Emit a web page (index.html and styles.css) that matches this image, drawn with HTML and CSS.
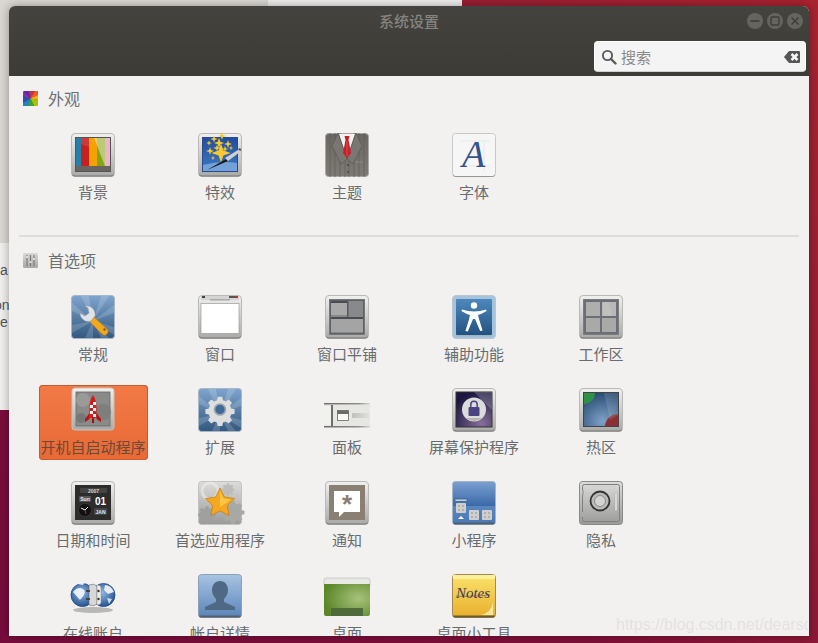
FILE: index.html
```html
<!DOCTYPE html>
<html lang="zh-CN">
<head>
<meta charset="utf-8">
<title>系统设置</title>
<link rel="stylesheet" href="styles.css">
</head>
<body>
<svg class="defs" width="0" height="0" aria-hidden="true">
  <defs>
    <linearGradient id="silver" x1="0" y1="0" x2="0" y2="1"><stop offset="0" stop-color="#f0f0ee"/><stop offset="1" stop-color="#a9a9a7"/></linearGradient>
    <linearGradient id="blue" x1="0" y1="0" x2="0" y2="1"><stop offset="0" stop-color="#7ea5cf"/><stop offset="1" stop-color="#33587f"/></linearGradient>
    <linearGradient id="deep" x1="0" y1="0" x2="0" y2="1"><stop offset="0" stop-color="#4d88bd"/><stop offset="1" stop-color="#245380"/></linearGradient>
    <linearGradient id="royal" x1="0" y1="0" x2="0" y2="1"><stop offset="0" stop-color="#1f4f9e"/><stop offset="1" stop-color="#3f78c4"/></linearGradient>
    <linearGradient id="widget" x1="0" y1="0" x2="0" y2="1"><stop offset="0" stop-color="#7a9fd0"/><stop offset="1" stop-color="#3a69a8"/></linearGradient>
    <linearGradient id="widget2" x1="0" y1="0" x2="0" y2="1"><stop offset="0" stop-color="#7098cc"/><stop offset="1" stop-color="#4a78b5"/></linearGradient>
    <linearGradient id="grey" x1="0" y1="0" x2="0" y2="1"><stop offset="0" stop-color="#d8d8d6"/><stop offset="1" stop-color="#a6a6a4"/></linearGradient>
    <linearGradient id="note" x1="0" y1="0" x2="0" y2="1"><stop offset="0" stop-color="#fbe36c"/><stop offset="1" stop-color="#e9ae2c"/></linearGradient>
    <linearGradient id="steel" x1="0" y1="0" x2="0" y2="1"><stop offset="0" stop-color="#dcdcda"/><stop offset="1" stop-color="#9a9a98"/></linearGradient>
    <linearGradient id="sky" x1="0" y1="0" x2="0" y2="1"><stop offset="0" stop-color="#a9c3e2"/><stop offset="1" stop-color="#5a85b8"/></linearGradient>
    <linearGradient id="suit" x1="0" y1="0" x2="0" y2="1"><stop offset="0" stop-color="#6a6763"/><stop offset="1" stop-color="#7e7b77"/></linearGradient>
    <linearGradient id="fade" x1="0" y1="0" x2="1" y2="0"><stop offset="0" stop-color="#bfc1bb"/><stop offset="1" stop-color="#dfe0dc"/></linearGradient>
    <linearGradient id="fadeline" x1="0" y1="0" x2="1" y2="0"><stop offset="0" stop-color="#6e6e6c"/><stop offset=".75" stop-color="#8d8d8b"/><stop offset="1" stop-color="#d5d5d3"/></linearGradient>
    <radialGradient id="grass" cx=".75" cy=".45" r=".75"><stop offset="0" stop-color="#a7c27c"/><stop offset="1" stop-color="#5b8729"/></radialGradient>
    <radialGradient id="plum" cx=".7" cy=".9" r=".9"><stop offset="0" stop-color="#86709a"/><stop offset="1" stop-color="#1c1640"/></radialGradient>
    <radialGradient id="hot" cx=".55" cy=".85" r=".9"><stop offset="0" stop-color="#7fa3c8"/><stop offset="1" stop-color="#23466d"/></radialGradient>
    <radialGradient id="globe" cx=".45" cy=".4" r=".65"><stop offset="0" stop-color="#8fb8e6"/><stop offset="1" stop-color="#1d4c8a"/></radialGradient>
    <g id="frame"><rect x=".5" y=".5" width="43" height="43" rx="3.5" fill="url(#silver)" stroke="#b9b9b7"/><path d="M1 40.5v-1a3 3 0 0 0 3 3h36a3 3 0 0 0 3-3v1a3 3 0 0 1-3 3H4a3 3 0 0 1-3-3z" fill="#777"/></g>
    <g id="rays" opacity=".16" fill="#fff"><path d="M22 26 1 8v8zM22 26 1 30v8zM22 26 10 1h8zM22 26 30 1h8zM22 26 43 10v8zM22 26 43 32v8zM22 26 14 43h8zM22 26 30 43h8z"/></g>
    <g id="puzzle"><rect width="10" height="10" rx="1" fill="#cfcfcd"/><path d="M2 2h2v2H2zM6 6h2v2H6zM6 2h2v2H6zM2 6h2v2H2z" fill="#b0b0ae"/></g>
    <path id="star4" d="M0-4 1-1 4 0 1 1 0 4-1 1-4 0-1-1z" fill="#f9c92e"/>
    <path id="gear" d="M-2-11h4l.6 3 2.400 1 2.600-1.700 2.800 2.800L8.700-3.300l1 2.400 3 .6v4l-3 .6-1 2.400 1.700 2.600-2.800 2.800-2.600-1.700-2.400 1-.6 3h-4l-.6-3-2.400-1-2.600 1.700-2.800-2.800 1.700-2.600-1-2.400-3-.6v-4l3-.6 1-2.400-1.700-2.600 2.800-2.800L-5-7l2.400-1z"/>
  </defs>
</svg>

<div class="desktop">
  <div class="bg-window">
    <div class="bg-top"></div>
    <p class="bg-text bg-a">a</p>
    <p class="bg-text bg-on">on</p>
    <p class="bg-text bg-e">e</p>
  </div>
  <div class="bg-strip"></div>
  <div class="window">
    <header class="titlebar">
      <div class="title-row">
        <h1 class="title">系统设置</h1>
        <div class="win-buttons">
          <span class="win-btn"><svg width="16" height="16" viewBox="0 0 16 16"><rect x="3.500" y="7.200" width="9" height="1.600" fill="#3f3e3a"/></svg></span>
          <span class="win-btn"><svg width="16" height="16" viewBox="0 0 16 16"><rect x="4" y="4" width="8" height="8" rx="1" fill="none" stroke="#3f3e3a" stroke-width="1.400"/></svg></span>
          <span class="win-btn"><svg width="16" height="16" viewBox="0 0 16 16"><path d="m4.500 4.500 7 7m0-7-7 7" stroke="#3f3e3a" stroke-width="1.500"/></svg></span>
        </div>
      </div>
      <div class="search-row">
        <div class="search">
          <svg width="16" height="16" viewBox="0 0 16 16"><circle cx="6.500" cy="6.500" r="4.600" fill="none" stroke="#5a5a5a" stroke-width="1.900"/><path d="m10 10 4.500 4.500" stroke="#5a5a5a" stroke-width="2.400" stroke-linecap="round"/></svg>
          <span class="search-text">搜索</span>
          <svg class="clear" width="16" height="12" viewBox="0 0 16 12"><path d="M5 0h10a1 1 0 0 1 1 1v10a1 1 0 0 1-1 1H5L0 6z" fill="#555"/><path d="m7.500 3 6 6m0-6-6 6" stroke="#f4f4f4" stroke-width="2.600"/></svg>
        </div>
      </div>
    </header>

    <main class="content">
      <section class="section section-first">
        <h2 class="section-head">
          <svg width="15" height="15" viewBox="0 0 15 15"><rect width="15" height="15" rx="1.500" fill="#8c2fa0"/><path d="M7.500 7.500 0 0h6z" fill="#5a2ba8"/><path d="M7.500 7.500 6 0h6z" fill="#c8304a"/><path d="M7.500 7.500 12 0h3v4z" fill="#ee5a20"/><path d="M7.500 7.500 15 4v5z" fill="#f5b400"/><path d="M7.500 7.500 15 9v6h-4z" fill="#a6c400"/><path d="M7.500 7.500 11 15H5z" fill="#3aa52c"/><path d="M7.500 7.500 5 15H0v-3z" fill="#1f86b8"/><path d="M7.500 7.500 0 12V5z" fill="#2c50b0"/></svg>
          <span>外观</span>
        </h2>
        <div class="grid">
          <a class="item">
            <svg class="icon" viewBox="0 0 44 44"><use href="#frame"/><rect x="4" y="4" width="36" height="35" fill="#555"/><rect x="5" y="5" width="5" height="28" fill="#2380a8"/><rect x="10" y="5" width="8" height="28" fill="#c81f1f"/><rect x="18" y="5" width="8" height="28" fill="#f5a200"/><rect x="26" y="5" width="8" height="28" fill="#85a516"/><rect x="34" y="5" width="5" height="28" fill="#e27fa4"/><path d="M10 5h8v9L10 11z" fill="#fff" opacity=".12"/><path d="M23 5h16v28h-5z" fill="#fff" opacity=".42"/><rect x="5" y="33" width="34" height="5" fill="#6a6460"/></svg>
            <span class="label">背景</span>
          </a>
          <a class="item">
            <svg class="icon" viewBox="0 0 44 44"><use href="#frame"/><rect x="4" y="4" width="36" height="35" fill="#2a4c88"/><rect x="5" y="5" width="34" height="33" fill="url(#royal)"/><path d="M5 32q18-5 34-2v8H5z" fill="#86b0e0" opacity=".75"/><use href="#star4" transform="translate(23 20) scale(2.400)"/><use href="#star4" transform="translate(24 3) scale(1)"/><use href="#star4" transform="translate(16 6) scale(.9)"/><use href="#star4" transform="translate(30 11) scale(1)"/><use href="#star4" transform="translate(21 10) scale(1.300)"/><use href="#star4" transform="translate(11 10) scale(.7)"/><use href="#star4" transform="translate(12 18) scale(1)"/><use href="#star4" transform="translate(33 15) scale(.6)"/><use href="#star4" transform="translate(15 25) scale(.6)"/><use href="#star4" transform="translate(19 15) scale(.9)"/><use href="#star4" transform="translate(27 16) scale(.8)"/><path d="M9 37 28 26l2 2z" fill="#1c1c1c"/><path d="m27 25 13-8 2 2-12 9z" fill="#cfcfcf"/><path d="m40 16 2 2 1.500-1-1.500-2z" fill="#555"/></svg>
            <span class="label">特效</span>
          </a>
          <a class="item">
            <svg class="icon" viewBox="0 0 44 44"><rect x=".5" y=".5" width="43" height="43" rx="3" fill="url(#suit)" stroke="#a9a8a6"/><path d="M5 0v44M10 0v44M15 0v44M29 0v44M34 0v44M39 0v44M20 25v19M24 25v19" stroke="#625f5c" stroke-width=".8"/><path d="M14 1h16l-8 24z" fill="#f2f2f2"/><path d="M13 0 22 26 16 31 7 13zM31 0 22 26 28 31 37 13z" fill="#7a7773" stroke="#56534f" stroke-width=".6"/><path d="M19.500 3h5l-1 4 2.500 13-4 5-4-5 2.500-13z" fill="#c81e26"/><path d="M22 8v15" stroke="#e85a5c" stroke-width=".8"/><circle cx="23" cy="32" r="1" fill="#444"/><circle cx="23" cy="39" r="1" fill="#444"/><path d="M30 29h8" stroke="#8b8985"/></svg>
            <span class="label">主题</span>
          </a>
          <a class="item">
            <svg class="icon" viewBox="0 0 44 44"><rect x=".5" y=".5" width="43" height="43" rx="3" fill="#f6f6f6" stroke="#c9c9c7"/><path d="M1 41v.5a2 2 0 0 0 2 2h38a2 2 0 0 0 2-2V41a2 2 0 0 1-2 2H3a2 2 0 0 1-2-2z" fill="#666"/><path d="M8 33h30M32 8v30M8 8h30" stroke="#e4e4e4" stroke-width=".7"/><text class="glyph-a" x="10" y="34">A</text></svg>
            <span class="label">字体</span>
          </a>
        </div>
        <hr class="divider">
      </section>

      <section class="section">
        <h2 class="section-head">
          <svg width="15" height="15" viewBox="0 0 15 15"><rect width="15" height="15" rx="1.500" fill="url(#grey)"/><path d="M4 2v11M7.500 2v11M11 2v11" stroke="#777" stroke-width="1.100"/><path d="M3 4h2M6.500 9h2M10 6h2" stroke="#eee" stroke-width="1.600"/></svg>
          <span>首选项</span>
        </h2>
        <div class="grid">
          <a class="item">
            <svg class="icon" viewBox="0 0 44 44"><rect x=".5" y=".5" width="43" height="43" rx="3" fill="url(#blue)" stroke="#a9b6c4"/><use href="#rays"/><path d="m23 22 13 12a3 3 0 0 1-5 5L19 27z" fill="#f2a71c" stroke="#b97a0c" stroke-width=".6"/><circle cx="33.500" cy="34.500" r="1.200" fill="#8a5a08"/><path d="M20 26c-5 2-11-2-11-8l5 3 4-3-1-5-3-2c6-1 11 4 10 10z" fill="#dfe3e7" stroke="#8d98a3" stroke-width=".5"/></svg>
            <span class="label">常规</span>
          </a>
          <a class="item">
            <svg class="icon" viewBox="0 0 44 44"><use href="#frame"/><rect x="3" y="1" width="38" height="4" fill="#d4d4d2"/><rect x="4" y="1" width="3" height="2" fill="#444"/><rect x="31" y="1" width="9" height="2" fill="#555"/><rect x="37" y="1" width="3" height="2" fill="#c83030"/><rect x="12" y="4" width="20" height="1.500" fill="#aaa"/><rect x="3" y="8.500" width="38" height="30" fill="#fff" stroke="#9a9a98" stroke-width=".7"/></svg>
            <span class="label">窗口</span>
          </a>
          <a class="item">
            <svg class="icon" viewBox="0 0 44 44"><use href="#frame"/><rect x="4.500" y="4.500" width="35" height="35" fill="#5c6068" stroke="#777"/><rect x="6" y="6" width="32" height="32" fill="#88898a"/><rect x="6" y="6" width="16" height="14" fill="#a8a8a8"/><rect x="6" y="6" width="16" height="2" fill="#4a4c52"/><rect x="22" y="6" width="1.500" height="17" fill="#555860"/><rect x="6" y="22" width="32" height="2" fill="#4a4c52"/><rect x="6" y="24" width="32" height="13" fill="#a4a4a4"/></svg>
            <span class="label">窗口平铺</span>
          </a>
          <a class="item">
            <svg class="icon" viewBox="0 0 44 44"><rect x=".5" y=".5" width="43" height="43" rx="3.500" fill="#a6c3dc" stroke="#b9c6d2"/><rect x="4" y="4" width="36" height="36" rx="1" fill="url(#deep)"/><path d="M4 40h36v1.500H4z" fill="#9cb5c9"/><circle cx="22" cy="10.500" r="3.200" fill="#fff"/><path d="M10 14.500q12 4 24 0l.6 1.400q-5 3-8.600 4l1 4 3.600 11.500-2.400.6L23 24h-2l-5.200 12.600-2.400-.6L17 24.500l1-4.500q-3.600-1-8.600-4z" fill="#fff"/></svg>
            <span class="label">辅助功能</span>
          </a>
          <a class="item">
            <svg class="icon" viewBox="0 0 44 44"><use href="#frame"/><rect x="4.500" y="4.500" width="35" height="35" fill="#6b6e76" stroke="#7b7b7b"/><rect x="7" y="7" width="14" height="14" fill="#aeaeac"/><rect x="23" y="7" width="14" height="14" fill="#b8b8b6"/><rect x="7" y="23" width="14" height="14" fill="#a9a9a7"/><rect x="23" y="23" width="14" height="14" fill="#a9a9a7"/><path d="M24 7h6l3 14h-9z" fill="#fff" opacity=".12"/></svg>
            <span class="label">工作区</span>
          </a>

          <a class="item selected">
            <svg class="icon" viewBox="0 0 44 44"><rect x="1" y="0" width="42" height="42" rx="3" fill="url(#silver)" stroke="#c4c4c2"/><rect x="5" y="4" width="34" height="34" fill="#8a8a88" stroke="#666" stroke-width=".8"/><circle cx="12" cy="12" r="7" fill="#9a9a98"/><circle cx="32" cy="24" r="8" fill="#7e7e7c"/><circle cx="10" cy="30" r="5" fill="#777"/><path d="M22 7c3 4 3.500 9 3.500 14v9h-7v-9c0-5 .5-10 3.500-14z" fill="#d41a1a"/><path d="M19 17h3v3h-3zM22 20h3v3h-3zM22 14h3v3h-3zM19 23h3v3h-3zM22 26h3v3h-3z" fill="#f2f2f2"/><path d="M18.500 25 14 31v3l4.500-3zM25.500 25 30 31v3l-4.500-3z" fill="#b81212"/><rect x="21" y="30" width="2" height="5" fill="#a01010"/></svg>
            <span class="label">开机自启动程序</span>
          </a>
          <a class="item">
            <svg class="icon" viewBox="0 0 44 44"><rect x=".5" y=".5" width="43" height="43" rx="3" fill="url(#blue)" stroke="#a9b6c4"/><use href="#rays"/><use href="#gear" transform="translate(22 21.500) scale(1.150)" fill="#dedede"/><circle cx="22" cy="21.500" r="5.500" fill="#3f6a97" stroke="#9fa7ae" stroke-width="1.600"/></svg>
            <span class="label">扩展</span>
          </a>
          <a class="item">
            <svg class="icon" viewBox="0 0 44 44"><rect x="-1" y="17" width="46" height="21" fill="#e6e7e3"/><rect x="-1" y="15" width="46" height="1.500" fill="url(#fadeline)"/><rect x="-1" y="38" width="46" height="1.500" fill="url(#fadeline)"/><rect x="-1" y="18" width="7" height="19" fill="#f1f1ee"/><rect x="6" y="17" width="2" height="21" fill="#6e6e6c"/><rect x="12.500" y="22.500" width="11" height="10" fill="#f8f8f6" stroke="#666" stroke-width=".8"/><rect x="12.500" y="22.500" width="11" height="3.500" fill="#6a6a68"/><rect x="27" y="25" width="17" height="5" fill="url(#fade)"/></svg>
            <span class="label">面板</span>
          </a>
          <a class="item">
            <svg class="icon" viewBox="0 0 44 44"><use href="#frame"/><rect x="4" y="4" width="36" height="35" fill="url(#plum)" stroke="#333"/><path d="M22 4h18v18z" fill="#fff" opacity=".2"/><circle cx="22" cy="21.500" r="12" fill="#dcdcda"/><path d="M14 30a12 12 0 0 0 16 0z" fill="#b5b5b3"/><rect x="16.500" y="19" width="11" height="9" rx="1" fill="#4a4482"/><path d="M18.800 19v-2.500a3.200 3.200 0 0 1 6.400 0V19" fill="none" stroke="#4a4482" stroke-width="1.500"/></svg>
            <span class="label">屏幕保护程序</span>
          </a>
          <a class="item">
            <svg class="icon" viewBox="0 0 44 44"><use href="#frame"/><rect x="4.500" y="4.500" width="35" height="34" fill="url(#hot)" stroke="#444"/><path d="M5 5h11a11 11 0 0 1-11 11z" fill="#2f9148"/><path d="M39 26v12H26a13 13 0 0 1 13-12z" fill="#8c2f35"/><path d="M25 5h14v22L31 32z" fill="#fff" opacity=".12"/></svg>
            <span class="label">热区</span>
          </a>

          <a class="item">
            <svg class="icon" viewBox="0 0 44 44"><use href="#frame"/><rect x="4" y="4" width="36" height="35" fill="#2c2c2c"/><rect x="9" y="7" width="27" height="5" rx="1" fill="#444"/><text class="cal cal-y" x="22.500" y="11.500">2007</text><rect x="8" y="15" width="12" height="6" rx="1" fill="#555"/><text class="cal" x="14" y="20">Sun</text><text class="cal cal-big" x="29.500" y="24">01</text><circle cx="14" cy="29" r="6.500" fill="#111" stroke="#444" stroke-width=".6"/><path d="m14 29-4-2m4 2 3-3" stroke="#eee" stroke-width="1"/><path d="m14 29 1 4" stroke="#d33" stroke-width=".8"/><rect x="23" y="27" width="13" height="7" rx="1" fill="#444"/><text class="cal" x="29.500" y="33">JAN</text></svg>
            <span class="label">日期和时间</span>
          </a>
          <a class="item">
            <svg class="icon" viewBox="0 0 44 44"><rect x=".5" y=".5" width="43" height="43" rx="3" fill="url(#steel)" stroke="#c2c2c0"/><circle cx="12" cy="10" r="8" fill="none" stroke="#ececea" stroke-width="3" opacity=".6"/><use href="#gear" transform="translate(9 33) scale(.7)" fill="#a0a09e"/><use href="#gear" transform="translate(35 30) scale(.9)" fill="#a8a8a6"/><use href="#gear" transform="translate(30 8) scale(.5)" fill="#bcbcba"/><path d="m22 7 4.500 9 10 1.500-7.200 7 1.700 10L22 29.800l-9 4.700 1.700-10-7.200-7 10-1.500z" fill="#f5a81f" stroke="#c67a0a" stroke-width=".7"/><path d="m22 10 3.500 7.500L33 18.700 22 26z" fill="#ffd257" opacity=".7"/></svg>
            <span class="label">首选应用程序</span>
          </a>
          <a class="item">
            <svg class="icon" viewBox="0 0 44 44"><use href="#frame"/><rect x="4" y="4" width="36" height="35" fill="#8a7f73"/><path d="M9 10h26v21H19l-5 5v-5H9z" fill="#fff"/><text class="asterisk" x="22" y="32">*</text></svg>
            <span class="label">通知</span>
          </a>
          <a class="item">
            <svg class="icon" viewBox="0 0 44 44"><rect x=".5" y=".5" width="43" height="43" rx="3" fill="url(#widget2)" stroke="#a5b5c5"/><path d="M1 25V4a3 3 0 0 1 3-3h36a3 3 0 0 1 3 3v21z" fill="url(#widget)"/><rect x="3" y="18" width="12" height="2.500" fill="#b9cde2" stroke="#2c4d75" stroke-width=".6"/><use href="#puzzle" transform="translate(4 22)"/><use href="#puzzle" transform="translate(17 29)"/><use href="#puzzle" transform="translate(30 29)"/><path d="m9 35 3 3H6z" fill="#fff"/><path d="M1 41.500h42a2 2 0 0 1-2 2H3a2 2 0 0 1-2-2z" fill="#4f5f72"/></svg>
            <span class="label">小程序</span>
          </a>
          <a class="item">
            <svg class="icon" viewBox="0 0 44 44"><rect x=".5" y=".5" width="43" height="43" rx="3" fill="url(#steel)" stroke="#8a8a88"/><rect x="3.500" y="3.500" width="37" height="37" rx="2" fill="none" stroke="#7e7e7c"/><rect x="3" y="9" width="2" height="5" fill="#aaa"/><rect x="3" y="31" width="2" height="5" fill="#aaa"/><circle cx="21" cy="20" r="9.500" fill="#bbb" stroke="#333" stroke-width="1.800"/><circle cx="21" cy="20" r="5.500" fill="#d4d4d2" stroke="#8a8a88"/><rect x="36" y="12" width="2" height="18" rx="1" fill="#e8e8e6" stroke="#999" stroke-width=".4"/></svg>
            <span class="label">隐私</span>
          </a>

          <a class="item">
            <svg class="icon" viewBox="0 0 44 44"><ellipse cx="22" cy="36" rx="20" ry="3" fill="#888" opacity=".55"/><circle cx="11.500" cy="21" r="11.500" fill="url(#globe)" stroke="#1f4a7c" stroke-width=".8"/><circle cx="32.500" cy="21" r="11.500" fill="url(#globe)" stroke="#1f4a7c" stroke-width=".8"/><path d="M2 18q5-6 10-3t-3 11zM6 10q4-3 8-2l-2 3zM34 11q6 0 9 7l-6 2-4-4z" fill="#f4f7fa" opacity=".9"/><path d="M36 24l5 1-3 5z" fill="#f4f7fa" opacity=".8"/><path d="M18 11q5-2 8 1v18q-3 3-8 1z" fill="#d8d8d6" stroke="#666" stroke-width=".6"/><path d="M15 16h4v2h-4zM15 24h4v2h-4z" fill="#444"/><path d="M26 11q4 0 4 3v14q0 3-4 3z" fill="#ededeb" stroke="#888" stroke-width=".5"/><circle cx="27.500" cy="17" r="1.200" fill="#333"/><circle cx="27.500" cy="25" r="1.200" fill="#333"/></svg>
            <span class="label">在线账户</span>
          </a>
          <a class="item">
            <svg class="icon" viewBox="0 0 44 44"><rect x=".5" y=".5" width="43" height="43" rx="3" fill="url(#sky)" stroke="#8a9fb8"/><path d="M1 41.500h42a2 2 0 0 1-2 2H3a2 2 0 0 1-2-2z" fill="#55606c"/><path d="M22 7c5 0 8 4 8 9 0 4-2 7-4 9v3l11 5v3H7v-3l11-5v-3c-2-2-4-5-4-9 0-5 3-9 8-9z" fill="#4f6884"/></svg>
            <span class="label">帐户详情</span>
          </a>
          <a class="item">
            <svg class="icon" viewBox="0 0 44 44"><path d="M-1 6a2 2 0 0 1 2-2h42a2 2 0 0 1 2 2v5H-1z" fill="#e8e8e4" stroke="#aaa" stroke-width=".5"/><path d="M-1 10h46v30a2 2 0 0 1-2 2H1a2 2 0 0 1-2-2z" fill="url(#grass)"/><rect x="6" y="34" width="32" height="8" fill="#4f6b3a"/></svg>
            <span class="label">桌面</span>
          </a>
          <a class="item">
            <svg class="icon" viewBox="0 0 44 44"><rect x=".5" y=".5" width="43" height="43" rx="3" fill="url(#note)" stroke="#a08a50"/><rect x="1" y="1" width="42" height="4" fill="#fdf09a"/><path d="M28 41q11-1 13-13v13z" fill="#f8e9a0"/><path d="M1 41.500h42a2 2 0 0 1-2 2H3a2 2 0 0 1-2-2z" fill="#6a5a30"/><text class="notes" x="21" y="24">Notes</text><path d="M4 22q8 1 34-1" fill="none" stroke="#3e3a5a" stroke-width=".5"/></svg>
            <span class="label">桌面小工具</span>
          </a>
        </div>
      </section>
    </main>
  </div>
  <div class="watermark">https://blog.csdn.net/dearsq</div>
</div>
</body>
</html>
```

FILE: styles.css
```css
* { box-sizing: border-box; }
html, body { margin: 0; padding: 0; height: 100%; }
body {
  overflow: hidden;
  font-family: "Noto Sans CJK SC", "Noto Sans", sans-serif;
}
.defs { display: block; width: 0; height: 0; }

.desktop {
  position: relative;
  width: 818px;
  height: 643px;
  overflow: hidden;
  background: linear-gradient(45deg, #760c3c 0%, #7e1038 40%, #8f1b36 60%, #a8232f 100%);
  padding: 6px 9px 7px;
}

.bg-window {
  position: absolute;
  left: 0;
  top: 0;
  width: 462px;
  height: 410px;
  background: #f1efee;
}
.bg-top {
  height: 243px;
  width: 268px;
  background: #dad7d3;
}
.bg-text {
  position: absolute;
  margin: 0;
  left: 0;
  font: 14px/16px "Liberation Sans", sans-serif;
  color: #555;
}
.bg-a { top: 262px; }
.bg-on { top: 297px; left: -6px; }
.bg-e { top: 314px; left: 0; }
.bg-strip {
  position: absolute;
  left: 268px;
  top: 0;
  width: 194px;
  height: 6px;
  background: #efeeed;
}

.window {
  position: relative;
  width: 800px;
  height: 630px;
  border-radius: 6px 6px 0 0;
  overflow: hidden;
  background: #f2f1f0;
  box-shadow: 0 0 10px rgba(0, 0, 0, .35);
  display: flex;
  flex-direction: column;
}

.titlebar {
  height: 70px;
  flex: none;
  background: linear-gradient(#45433f, #3c3b36);
  display: flex;
  flex-direction: column;
}
.title-row {
  height: 34px;
  flex: none;
  display: grid;
  grid-template-columns: 1fr auto 1fr;
  align-items: center;
  padding: 0 0 4px;
}
.title {
  grid-column: 2;
  margin: 0;
  font-size: 15px;
  line-height: 20px;
  font-weight: 500;
  color: #85847e;
}
.win-buttons {
  grid-column: 3;
  justify-self: end;
  display: flex;
  gap: 4px;
  margin-right: 6px;
}
.win-btn {
  width: 16px;
  height: 16px;
  border-radius: 50%;
  background: #65645e;
  display: block;
}
.win-btn svg { display: block; }

.search-row {
  display: flex;
  justify-content: flex-end;
  padding-right: 3px;
  margin-top: 1px;
}
.search {
  width: 212px;
  height: 31px;
  border-radius: 4px;
  background: #f4f4f4;
  border: 1px solid #fff;
  border-bottom-color: #cfcfcf;
  display: flex;
  align-items: center;
  padding: 0 5px 0 6px;
  gap: 4px;
}
.search-text {
  flex: 1;
  font-size: 15px;
  line-height: 20px;
  color: #8a8a8a;
}
.clear { flex: none; }

.content {
  flex: 1;
  min-height: 0;
  overflow: hidden;
  padding-top: 11px;
}
.section { padding: 12px 10px 0; }
.section-first { padding-top: 0; }
.section-head {
  margin: 0 0 21px;
  height: 22px;
  display: flex;
  align-items: center;
  gap: 10px;
  padding-left: 4px;
  font-size: 16px;
  line-height: 22px;
  font-weight: 400;
  color: #6b6f72;
}
.section-head svg { flex: none; margin-top: 1px; }

.grid {
  display: grid;
  grid-template-columns: repeat(5, 109px);
  grid-auto-rows: 75px;
  column-gap: 18px;
  row-gap: 18px;
  padding-left: 20px;
}
.item {
  display: flex;
  flex-direction: column;
  align-items: center;
  padding: 3px 1px 0 0;
  border-radius: 4px;
}
.selected {
  background: linear-gradient(#f17a47, #e86a34);
  box-shadow: inset 0 0 0 1px #cb5a2c;
}
.icon {
  width: 44px;
  height: 44px;
  flex: none;
  display: block;
  overflow: visible;
}
.label {
  margin-top: 5px;
  font-size: 15px;
  line-height: 20px;
  color: #696c6e;
  white-space: nowrap;
}
.selected .label { color: #6a4a3a; }

.divider {
  margin: 30px 0 0;
  height: 2px;
  border: 0;
  background: #dfdddb;
}

.glyph-a {
  font: italic 38px "Liberation Serif", serif;
  fill: #33548f;
}
.cal {
  font: 700 5px "Liberation Sans", sans-serif;
  fill: #e8e8e8;
  text-anchor: middle;
}
.cal-y { fill: #cfcfcf; }
.cal-big { font-size: 10px; fill: #fff; }
.asterisk {
  font: 700 26px "Liberation Sans", sans-serif;
  fill: #8a7f73;
  text-anchor: middle;
}
.notes {
  font: italic 15px "Liberation Serif", serif;
  fill: #3e3a5a;
  text-anchor: middle;
}

.watermark {
  position: absolute;
  left: 616px;
  top: 614px;
  width: 192px;
  overflow: hidden;
  white-space: nowrap;
  font: 16px/22px "Liberation Sans", sans-serif;
  color: rgba(222, 222, 222, .8);
}
```
